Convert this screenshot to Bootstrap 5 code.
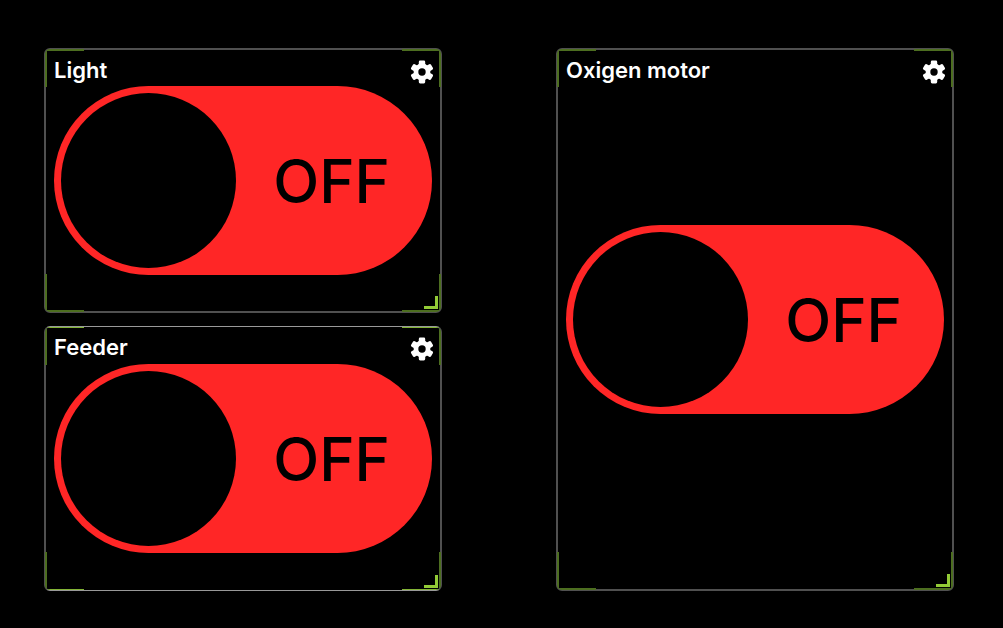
<!DOCTYPE html>
<html lang="en">
<head>
<meta charset="utf-8">
<meta name="viewport" content="width=device-width, initial-scale=1">
<title>Aquarium controls</title>
<link href="https://cdn.jsdelivr.net/npm/bootstrap@5.3.0/dist/css/bootstrap.min.css" rel="stylesheet">
<style>
body{background:#000;font-family:Inter,"Liberation Sans",sans-serif}
.board{display:grid;grid-template-columns:1fr 1fr;grid-template-rows:1fr 1fr;column-gap:114px;row-gap:13px;min-height:100vh;padding:48px 49px 37px 44px}
.tall{grid-column:2;grid-row:1/3}
.widget{--edge:#505050;--mark-h:#4d6e20;--mark-v:#4d6e20;position:relative;display:grid;border:2px solid var(--edge);border-radius:6px;padding:0 8px}
.widget>*{grid-area:1/1}
.widget::before{content:"";position:absolute;inset:-1px;border-radius:5px;pointer-events:none;
background:
linear-gradient(var(--mark-h) 0 0) 0 0/39px var(--mark-w,2px),
linear-gradient(var(--mark-h) 0 0) 100% 0/39px var(--mark-w,2px),
linear-gradient(var(--mark-h) 0 0) 0 100%/39px var(--mark-w,2px),
linear-gradient(var(--mark-h) 0 0) 100% 100%/39px var(--mark-w,2px),
linear-gradient(var(--mark-v) 0 0) 0 0/2px 38px,
linear-gradient(var(--mark-v) 0 0) 100% 0/2px 38px,
linear-gradient(var(--mark-v) 0 0) 0 100%/2px 38px,
linear-gradient(var(--mark-v) 0 0) 100% 100%/2px 38px;
background-repeat:no-repeat}
.crisp{--mark-h:#83b436;--mark-w:1px;border-top:1px solid #999;border-bottom:1px solid #999}
.crisp::before{inset:0 -1px}
.heading{font-size:22px;line-height:24px;font-weight:600;color:#fff}
.gear{border:0;padding:0;margin-right:-4px;background:none;color:#fff;line-height:0}
.switch{position:relative;display:grid;grid-template-columns:1fr 1fr;width:100%;aspect-ratio:2/1;border-radius:999px;background:#ff2626;color:#000;cursor:pointer}
.switch input{appearance:none;margin:7px;height:calc(100% - 14px);aspect-ratio:1;border-radius:50%;background:#000;cursor:pointer}
.switch span{padding-right:12px;font-size:60px;font-weight:500;line-height:64px}
.grip{justify-self:end;width:14px;height:13px;margin:0 -6px 2px 0;border:solid #93cb36;border-width:0 3px 3px 0}
</style>
</head>
<body>
<main class="board">
<section class="widget">
<label class="switch align-self-center"><input type="checkbox" role="switch" aria-labelledby="t1"><span class="align-self-center text-center">OFF</span></label>
<header class="d-flex justify-content-between align-self-start pt-2"><h2 class="heading m-0" id="t1">Light</h2><button class="gear" type="button" aria-label="Light settings"><svg width="28" height="28" viewBox="0 0 28 28" fill="currentColor"><use href="#cog"/></svg></button></header>
<i class="grip align-self-end"></i>
</section>
<section class="widget crisp">
<label class="switch align-self-center"><input type="checkbox" role="switch" aria-labelledby="t2"><span class="align-self-center text-center">OFF</span></label>
<header class="d-flex justify-content-between align-self-start pt-2"><h2 class="heading m-0" id="t2">Feeder</h2><button class="gear" type="button" aria-label="Feeder settings"><svg width="28" height="28" viewBox="0 0 28 28" fill="currentColor"><use href="#cog"/></svg></button></header>
<i class="grip align-self-end"></i>
</section>
<section class="widget tall">
<label class="switch align-self-center"><input type="checkbox" role="switch" aria-labelledby="t3"><span class="align-self-center text-center">OFF</span></label>
<header class="d-flex justify-content-between align-self-start pt-2"><h2 class="heading m-0" id="t3">Oxigen motor</h2><button class="gear" type="button" aria-label="Oxigen motor settings"><svg width="28" height="28" viewBox="0 0 28 28" fill="currentColor"><use href="#cog"/></svg></button></header>
<i class="grip align-self-end"></i>
</section>
</main>
<svg class="position-absolute" width="0" height="0" aria-hidden="true"><defs><g id="cog"><circle cx="14" cy="14" r="8.4"/><rect x="10.8" y="2.5" width="6.4" height="23" rx="1.4"/><rect x="10.8" y="2.5" width="6.4" height="23" rx="1.4" transform="rotate(60 14 14)"/><rect x="10.8" y="2.5" width="6.4" height="23" rx="1.4" transform="rotate(120 14 14)"/><circle cx="14" cy="14" r="3.7" fill="#000"/></g></defs></svg>
<script src="https://cdn.jsdelivr.net/npm/bootstrap@5.3.0/dist/js/bootstrap.bundle.min.js"></script>
</body>
</html>
